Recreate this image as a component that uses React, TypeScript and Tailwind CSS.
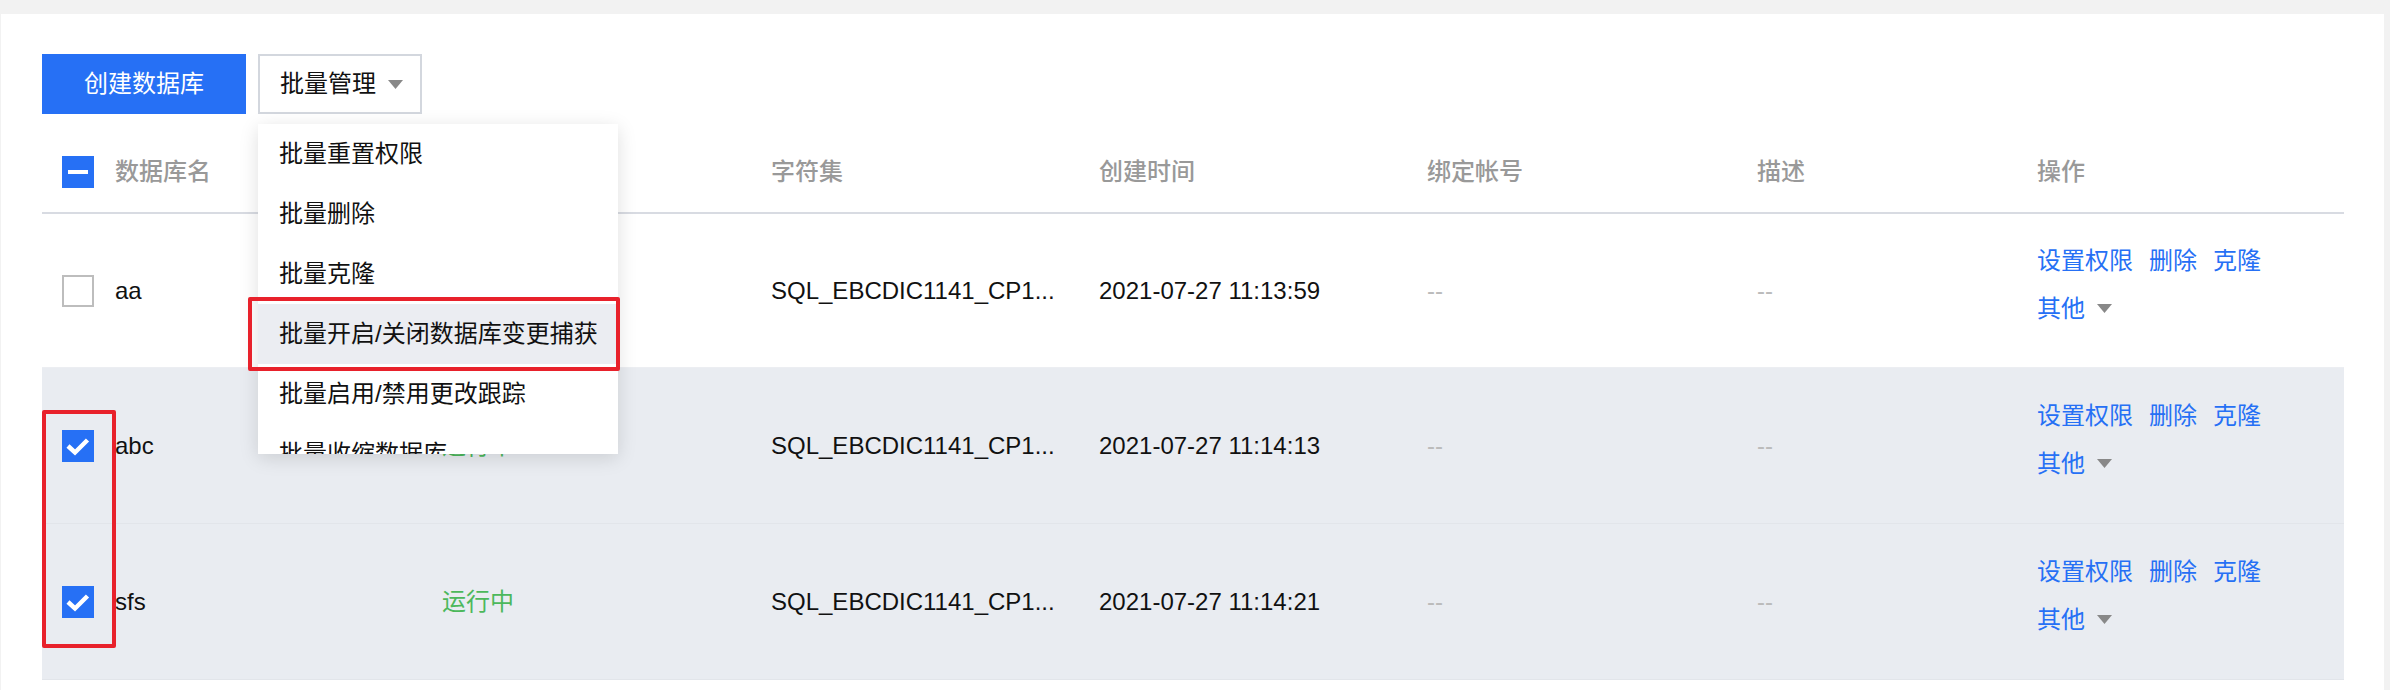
import React from 'react';

const font = { fontFamily: '"Liberation Sans", "Noto Sans CJK SC", sans-serif' };

const cols = 'grid grid-cols-[53px_327px_329px_328px_328px_330px_280px_1fr]';

type Row = {
  name: string;
  checked: boolean;
  charset: string;
  created: string;
};

const rows: Row[] = [
  { name: 'aa', checked: false, charset: 'SQL_EBCDIC1141_CP1...', created: '2021-07-27 11:13:59' },
  { name: 'abc', checked: true, charset: 'SQL_EBCDIC1141_CP1...', created: '2021-07-27 11:14:13' },
  { name: 'sfs', checked: true, charset: 'SQL_EBCDIC1141_CP1...', created: '2021-07-27 11:14:21' },
];

const menuItems = [
  '批量重置权限',
  '批量删除',
  '批量克隆',
  '批量开启/关闭数据库变更捕获',
  '批量启用/禁用更改跟踪',
  '批量收缩数据库',
];

function Caret() {
  return (
    <svg width="15" height="9" viewBox="0 0 15 9" className="shrink-0">
      <path d="M0 0h15L7.5 9z" fill="#888" />
    </svg>
  );
}

function Checkbox({ state }: { state: 'on' | 'off' | 'some' }) {
  if (state === 'off') {
    return <div className="w-[32px] h-[32px] border-2 border-[#bdbdbd] bg-white" />;
  }
  return (
    <div className="w-[32px] h-[32px] bg-[#2670f5] flex items-center justify-center">
      {state === 'on' ? (
        <svg width="32" height="32" viewBox="0 0 32 32">
          <polyline points="6,16 13,22.5 25.5,10" fill="none" stroke="#fff" strokeWidth="4.5" />
        </svg>
      ) : (
        <div className="w-[20px] h-[4px] bg-white" />
      )}
    </div>
  );
}

function BatchMenu() {
  return (
    <div className="relative">
      <button className="h-[60px] w-[164px] border-2 border-[#d3d7de] bg-white pl-[20px] flex items-center gap-[12px] text-[24px] text-[#111]">
        批量管理
        <Caret />
      </button>
      <div className="absolute left-0 top-[70px] z-10 w-[360px] h-[330px] overflow-hidden bg-white shadow-[0_4px_18px_rgba(0,0,0,0.13)]">
        {menuItems.map((item, i) => (
          <div
            key={item}
            className={`h-[60px] pl-[21px] flex items-center text-[24px] text-[#111] whitespace-nowrap ${i === 3 ? 'bg-[#ebedf2]' : ''}`}
          >
            {item}
          </div>
        ))}
      </div>
      {/* annotation box */}
      <div className="absolute left-[-10px] top-[243px] z-20 w-[372px] h-[74px] border-4 border-[#e8212b] rounded-[2px]" />
    </div>
  );
}

export default function App() {
  return (
    <div style={font} className="w-full h-[690px] bg-[#f2f2f2] pt-[14px] pl-px pr-[6px] overflow-hidden">
      <div className="bg-white h-[676px] pl-[41px] pr-[40px] pt-[40px]">
        <div className="flex gap-[12px]">
          <button className="h-[60px] w-[204px] bg-[#2670f5] text-white text-[24px]">创建数据库</button>
          <BatchMenu />
        </div>

        <div className="relative mt-[18px]">
          <div className={`${cols} h-[82px] border-b-2 border-[#d8dbe2] items-center text-[24px] text-[#999] font-medium`}>
            <div className="pl-[20px]">
              <Checkbox state="some" />
            </div>
            <div className="pl-[20px]">数据库名</div>
            <div className="pl-[20px]">状态</div>
            <div className="pl-[20px]">字符集</div>
            <div className="pl-[20px]">创建时间</div>
            <div className="pl-[20px]">绑定帐号</div>
            <div className="pl-[20px]">描述</div>
            <div className="pl-[20px]">操作</div>
          </div>

          {rows.map((r, i) => (
            <div
              key={r.name}
              className={`${cols} ${i === 0 ? 'h-[154px] bg-white border-[#eceef2]' : 'h-[156px] bg-[#e9ecf1] border-[#e2e5ea]'} border-b items-center text-[24px] text-[#111]`}
            >
              <div className="pl-[20px]">
                <Checkbox state={r.checked ? 'on' : 'off'} />
              </div>
              <div className="pl-[20px]">{r.name}</div>
              <div className="pl-[20px] text-[#4cb85c]">运行中</div>
              <div className="pl-[20px] whitespace-nowrap">{r.charset}</div>
              <div className="pl-[20px] whitespace-nowrap">{r.created}</div>
              <div className="pl-[20px] text-[#bbb]">--</div>
              <div className="pl-[20px] text-[#bbb]">--</div>
              <div className="pl-[20px] pb-[12px] text-[#2670f5] leading-[48px]">
                <div className="flex gap-[16px]">
                  <span>设置权限</span>
                  <span>删除</span>
                  <span>克隆</span>
                </div>
                <div className="flex items-center gap-[12px]">
                  <span>其他</span>
                  <Caret />
                </div>
              </div>
            </div>
          ))}

          {/* annotation box */}
          <div className="absolute left-0 top-[278px] w-[74px] h-[238px] border-4 border-[#e8212b] rounded-[2px]" />
        </div>
      </div>
    </div>
  );
}
